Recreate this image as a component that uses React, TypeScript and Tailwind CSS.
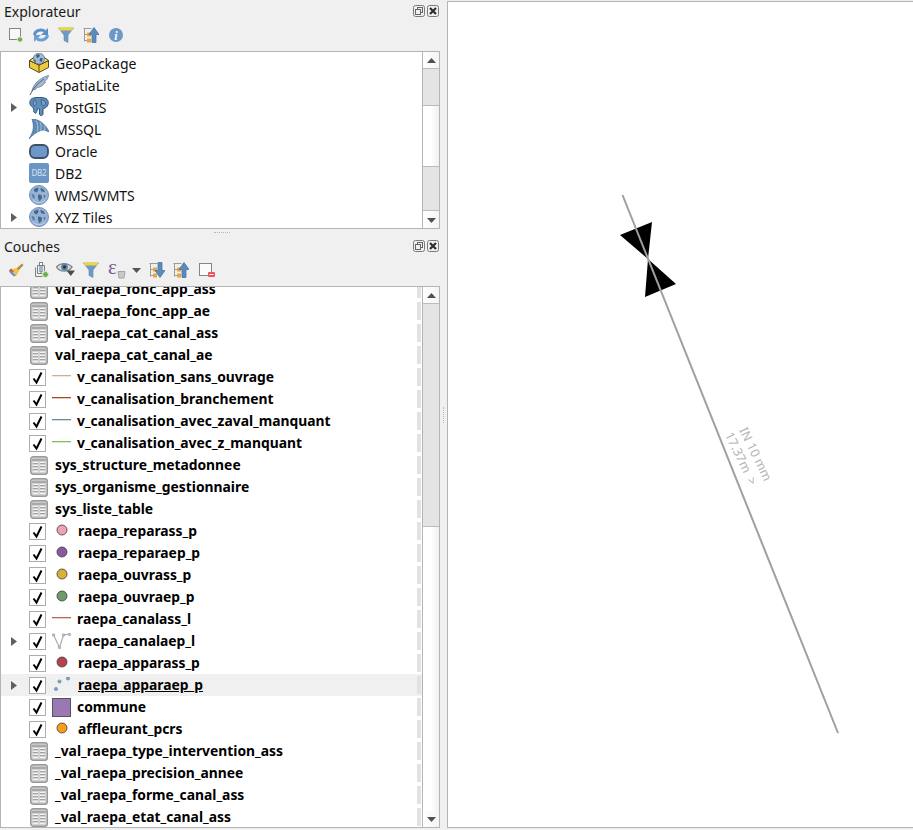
import React from 'react';

const uiFont = { fontFamily: '"Noto Sans", "Open Sans", sans-serif' };

function Svg({ size = 16, children }: { size?: number; children: React.ReactNode }) {
  return (
    <svg width={size} height={size} viewBox={`0 0 ${size} ${size}`} className="block shrink-0">
      {children}
    </svg>
  );
}

function FloatBtn() {
  return (
    <svg width="12" height="12" viewBox="0 0 12 12" className="block">
      <rect x=".5" y=".5" width="11" height="11" rx="2" fill="#f0f0f0" stroke="#7a7a7a" />
      <rect x="4.500" y="2.500" width="5" height="5" fill="none" stroke="#666" />
      <rect x="2.500" y="4.500" width="5" height="5" fill="#f0f0f0" stroke="#666" />
    </svg>
  );
}

function CloseBtn() {
  return (
    <svg width="12" height="12" viewBox="0 0 12 12" className="block">
      <rect x=".5" y=".5" width="11" height="11" rx="2" fill="#f0f0f0" stroke="#7a7a7a" />
      <path d="M3 3l6 6M9 3l-6 6" stroke="#2e2e2e" strokeWidth="2.200" />
    </svg>
  );
}

function DockTitle({ title }: { title: string }) {
  return (
    <div className="flex items-center h-6 pl-1 pr-px shrink-0">
      <span className="text-[14px] text-[#1a1a1a] flex-1 leading-[24px]">{title}</span>
      <div className="flex gap-[2px] -mt-[2px]">
        <FloatBtn />
        <CloseBtn />
      </div>
    </div>
  );
}

function ToolBtn({ children, w = 25 }: { children: React.ReactNode; w?: number }) {
  return (
    <div className="flex items-center justify-center h-4" style={{ width: w }}>
      {children}
    </div>
  );
}

function NewConnIcon() {
  return (
    <Svg>
      <rect x="1.500" y="1.500" width="11" height="11" fill="#f8f8f8" stroke="#858585" />
      <circle cx="12" cy="12.500" r="2.700" fill="#6fae4e" stroke="#e4f0dc" />
    </Svg>
  );
}

function RefreshIcon() {
  return (
    <Svg>
      <path d="M1.500 8a6.500 5.500 0 0 1 10.500-3.800" fill="none" stroke="#5b8fc7" strokeWidth="3" />
      <path d="M15 1v7H8z" fill="#5b8fc7" />
      <path d="M14.500 8a6.500 5.500 0 0 1-10.500 3.800" fill="none" stroke="#6c9fd3" strokeWidth="3" />
      <path d="M1 15V8h7z" fill="#6c9fd3" />
    </Svg>
  );
}

function FilterIcon() {
  return (
    <Svg>
      <path d="M0.500 1h15L10 8v7.500l-4-2V8z" fill="#6f9ac2" stroke="#5f87aa" strokeWidth=".6" />
      <path d="M0.500 .5h15L14 3.500H2z" fill="#efd640" />
    </Svg>
  );
}

function TreeArrowIcon({ down = false }: { down?: boolean }) {
  return (
    <Svg>
      <path d="M0.500 1.500h8M1.500 1.500v13M1.500 7.500h4M1.500 13.500h4" stroke="#9a9a9a" fill="none" />
      <rect x="4" y="5.500" width="4" height="4" fill="#f0a33c" />
      <rect x="4" y="11.500" width="4" height="4" fill="#f0a33c" />
      {down ? (
        <path d="M9 0.500h4v8h3l-5 7-5-7h3z" fill="#5a8dbb" stroke="#3f6d9c" strokeWidth=".7" />
      ) : (
        <path d="M11 .5l5 7h-3v8H9v-8H6z" fill="#5a8dbb" stroke="#3f6d9c" strokeWidth=".7" />
      )}
    </Svg>
  );
}

function InfoIcon() {
  return (
    <Svg>
      <circle cx="8" cy="8" r="7" fill="#6d98c6" />
      <text x="8" y="12.500" textAnchor="middle" fontSize="12" fontWeight="700" fontStyle="italic" fill="#fff" fontFamily="Liberation Serif, serif">i</text>
    </Svg>
  );
}

function BrushIcon() {
  return (
    <Svg>
      <path d="M8.500 6.500L14 1.500l1.500 1.500-5 5.500z" fill="#b58a3a" />
      <path d="M3 6.500c2 .5 4 0 5.500-.5l2.500 2.500c-.5 2-2 4-3 5.500z" fill="#edc53a" />
      <path d="M1 8.500L3 6.500l3 3.500-2.500 1z" fill="#d4503c" />
      <path d="M1 9c1 2 3 4 5 5.500l2-1-4.500-4.500z" fill="#6b8fc2" />
    </Svg>
  );
}

function AddGroupIcon() {
  return (
    <Svg>
      <path d="M4.500 3.500h7v8h-7zM2.500 5.500v9h7" fill="#eee" stroke="#7f7f7f" />
      <rect x="6.500" y=".5" width="3" height="3" fill="#fff" stroke="#7f7f7f" />
      <path d="M7 4v6h2V4" fill="none" stroke="#4f7fa8" />
      <circle cx="12.500" cy="12.500" r="3" fill="#6fae4e" stroke="#e4f0dc" />
    </Svg>
  );
}

function EyeIcon() {
  return (
    <svg width="20" height="16" viewBox="0 0 20 16" className="block">
      <path d="M0.500 5C4 0.500 12 0.500 16 5 12 10.500 4 10.500 0.500 5z" fill="#d4d9dd" stroke="#82878c" strokeWidth="1.300" />
      <circle cx="8.500" cy="5" r="3.400" fill="#5a80a4" />
      <circle cx="8.500" cy="5" r="1.500" fill="#1f2d3a" />
      <path d="M10.500 8.500h8.500l-4.200 5.500z" fill="#4c4c4c" />
    </svg>
  );
}

function EpsilonIcon() {
  return (
    <svg width="20" height="18" viewBox="0 0 20 18" className="block translate-x-[2px]">
      <text x="0" y="13" fontSize="21" fill="#7c5a96" fontFamily="Liberation Serif, serif">ε</text>
      <path d="M10 10.500h7l-1 6.500h-5z" fill="#c9c9c9" stroke="#a4a4a4" />
    </svg>
  );
}

function RemoveIcon() {
  return (
    <Svg>
      <rect x=".5" y="1.500" width="12" height="12" fill="#fbfbfb" stroke="#858585" />
      <rect x="9" y="10" width="7" height="5" rx="1" fill="#e8555a" />
      <rect x="10.500" y="12" width="4" height="1" fill="#fff" />
    </Svg>
  );
}

function Globe() {
  return (
    <svg width="20" height="20" viewBox="0 0 20 20" className="block">
      <circle cx="10" cy="10" r="9.500" fill="#96b2d4" stroke="#6f90b8" />
      <path d="M5 4l4-1.500 .5 2.500-2 2.500-2.500-1.500zM11 3l3.500 1 1.500 3-3.500-.5zM9 9.500l3.500.5 .5 3-2.500 3.500-1.500-3.500zM14.500 10.500l2-.5-1 3.500z" fill="#45658a" />
      <path d="M2.500 9l2.500.5 1 3.500-2 .5z" fill="#5a7aa0" />
      <path d="M3.500 15c3 3.500 10 3.500 13 0" fill="none" stroke="#bcd0e6" />
    </svg>
  );
}

function GeoPackageIcon() {
  return (
    <svg width="20" height="20" viewBox="0 0 20 20" className="block">
      <path d="M.5 7.500l9.500 4.500 9.500-4.500v7L10 19.500.5 14.500z" fill="#eecb3c" stroke="#544a1c" />
      <path d="M.5 7.500l5-3.500h9l5 3.500L10 12z" fill="#f4e48c" stroke="#3a3a2a" />
      <path d="M10 12v7" stroke="#544a1c" />
      <circle cx="10" cy="5.500" r="5.500" fill="#a3bad4" stroke="#55708e" strokeWidth=".7" />
      <path d="M7 2l3-1 1 2-3 2.500zM11 5l3 .5-1.500 3.500-2-1zM4.500 6l2 1 .5 2-2-1z" fill="#3f5e80" />
    </svg>
  );
}

function FeatherIcon() {
  return (
    <svg width="20" height="20" viewBox="0 0 20 20" className="block">
      <path d="M3 16C4 10 10 3 19.500 0.500 18.500 4 17.500 5 15.500 6.500l1 .5c-2 3-5 5.500-9 5.500l-.5 1.500-3 1z" fill="#a6b9cf" stroke="#5d7c9e" strokeWidth=".8" />
      <path d="M1 20C4 13 9 8 15 4" fill="none" stroke="#47617e" strokeWidth="1" />
    </svg>
  );
}

function ElephantIcon() {
  return (
    <svg width="20" height="20" viewBox="0 0 20 20" className="block">
      <path d="M3 1.500C6 0 14 0 17 1.500c3 2 3 6 .5 8.500-1 1-2.500 1.500-3.500 1.500v5c0 2.500-3 3-3.500.5v-5l-2-.5c-.5 2-.5 3.500-2 5l-2-2c.5-2 .5-3-1-4.500C0 8 0 3.500 3 1.500z" fill="#5f8ebd" stroke="#2f5578" />
      <path d="M6 2.500C4 4 3.500 7.500 5.500 9 7.500 8.500 8 5 6 2.500zM12 3c2-.5 4.500.5 4.500 3s-2.500 3.500-3.500 2z" fill="#7da5cb" stroke="#2f5578" strokeWidth=".8" />
    </svg>
  );
}

function SailIcon() {
  return (
    <svg width="20" height="20" viewBox="0 0 20 20" className="block">
      <path d="M3 0c7 .5 13 4.500 17 12.500-1 1-5-3-8-1-4 1-9 5-12 8.500C3.500 14 6 9 3 0z" fill="#5d8bb8" stroke="#43698e" strokeWidth=".7" />
      <path d="M7 1.500c2 3 2 6 1.500 11M11 3.500c1.500 2 1.500 5 .5 8M15 6.500c1 1.500 1 3 .5 4.500" stroke="#a9c4de" fill="none" />
    </svg>
  );
}

function OracleIcon() {
  return (
    <svg width="20" height="20" viewBox="0 0 20 20" className="block">
      <rect x="1" y="4" width="18" height="13" rx="5" fill="#6d97c6" stroke="#3a4f68" strokeWidth="1.800" />
    </svg>
  );
}

function Db2Icon() {
  return (
    <div className="w-5 h-5 rounded-[2px] bg-[#6a95c4] flex items-center justify-center text-[#d8e4f2] text-[8px] tracking-tight leading-none">
      DB2
    </div>
  );
}

function TableIcon() {
  return (
    <svg width="18" height="19" viewBox="0 0 18 19" className="block">
      <rect x=".7" y=".7" width="16.600" height="17.600" rx="2.500" fill="#d2d2d2" stroke="#999" strokeWidth="1.400" />
      <rect x="2" y="2" width="14" height="3" fill="#a9a9a9" />
      <rect x="2" y="2" width="14" height="1" fill="#c8c8c8" />
      <path d="M3 7.500h5M10 7.500h5M3 10.500h5M10 10.500h5M3 13.500h5M10 13.500h5" stroke="#a2a2a2" />
      <path d="M3 6.500h5M10 6.500h5M3 9.500h5M10 9.500h5M3 12.500h5M10 12.500h5M3 15.500h5M10 15.500h5" stroke="#f4f4f4" />
    </svg>
  );
}

function Arrow() {
  return (
    <svg width="6" height="9" viewBox="0 0 6 9" className="block">
      <path d="M0 0l6 4.500L0 9z" fill="#5e5e5e" />
    </svg>
  );
}

function ExplorerRow({ icon, label, expand }: { icon: React.ReactNode; label: string; expand?: boolean }) {
  return (
    <div className="flex items-center h-[22px]">
      <div className="w-[28px] pl-[10px] shrink-0">{expand && <Arrow />}</div>
      <div className="w-5 shrink-0">{icon}</div>
      <span className="ml-[6px] text-[14px] text-[#111] leading-[24px] pt-[2px]">{label}</span>
    </div>
  );
}

function CheckBox() {
  return (
    <svg width="17" height="17" viewBox="0 0 17 17" className="block">
      <rect x=".5" y=".5" width="16" height="16" fill="#fff" stroke="#adadad" />
      <path d="M4.500 9.500l3 4L12.500 3.500" fill="none" stroke="#000" strokeWidth="2" />
    </svg>
  );
}

function LineSym({ color }: { color: string }) {
  return (
    <svg width="19" height="2" viewBox="0 0 19 2" className="block -mt-[2px]">
      <rect x="0" y="0" width="19" height="1" fill={color} />
      <rect x="0" y="1" width="19" height="1" fill={color} opacity=".3" />
    </svg>
  );
}

function DotSym({ color }: { color: string }) {
  return (
    <svg width="12" height="12" viewBox="0 0 12 12" className="block -mt-[3px]">
      <circle cx="6" cy="6" r="5" fill={color} stroke="#3e3e3e" strokeWidth=".8" />
    </svg>
  );
}

function ScatterSym() {
  return (
    <svg width="19" height="16" viewBox="0 0 19 16" className="block">
      <circle cx="4" cy="12" r="1.600" fill="#7fa6c4" stroke="#4f7c9e" strokeWidth=".6" />
      <circle cx="7.500" cy="4.500" r="1.600" fill="#7fa6c4" stroke="#4f7c9e" strokeWidth=".6" />
      <circle cx="16" cy="1.500" r="1.600" fill="#7fa6c4" stroke="#4f7c9e" strokeWidth=".6" />
    </svg>
  );
}

function VertexSym() {
  return (
    <svg width="19" height="16" viewBox="0 0 19 16" className="block">
      <path d="M1.500 2l6 12.500L11.500 2l6-1" fill="none" stroke="#a8a8a8" strokeWidth="1.100" />
      <circle cx="1.500" cy="2" r="1.300" fill="#c4c4c4" stroke="#8a8a8a" strokeWidth=".5" />
      <circle cx="7.500" cy="14.500" r="1.300" fill="#c4c4c4" stroke="#8a8a8a" strokeWidth=".5" />
      <circle cx="11.500" cy="2" r="1.300" fill="#c4c4c4" stroke="#8a8a8a" strokeWidth=".5" />
      <circle cx="17.500" cy="1.500" r="1.300" fill="#c4c4c4" stroke="#8a8a8a" strokeWidth=".5" />
    </svg>
  );
}

type Layer = {
  label: string;
  kind: 'table' | 'line' | 'dot' | 'scatter' | 'vertex' | 'fill';
  color?: string;
  expand?: boolean;
  active?: boolean;
};

const layers: Layer[] = [
  { label: 'val_raepa_fonc_app_ass', kind: 'table' },
  { label: 'val_raepa_fonc_app_ae', kind: 'table' },
  { label: 'val_raepa_cat_canal_ass', kind: 'table' },
  { label: 'val_raepa_cat_canal_ae', kind: 'table' },
  { label: 'v_canalisation_sans_ouvrage', kind: 'line', color: '#c9b28f' },
  { label: 'v_canalisation_branchement', kind: 'line', color: '#a8482a' },
  { label: 'v_canalisation_avec_zaval_manquant', kind: 'line', color: '#6f8796' },
  { label: 'v_canalisation_avec_z_manquant', kind: 'line', color: '#7cc263' },
  { label: 'sys_structure_metadonnee', kind: 'table' },
  { label: 'sys_organisme_gestionnaire', kind: 'table' },
  { label: 'sys_liste_table', kind: 'table' },
  { label: 'raepa_reparass_p', kind: 'dot', color: '#f0a2b4' },
  { label: 'raepa_reparaep_p', kind: 'dot', color: '#8a5a9e' },
  { label: 'raepa_ouvrass_p', kind: 'dot', color: '#d8b238' },
  { label: 'raepa_ouvraep_p', kind: 'dot', color: '#6f9a6c' },
  { label: 'raepa_canalass_l', kind: 'line', color: '#b5694e' },
  { label: 'raepa_canalaep_l', kind: 'vertex', expand: true },
  { label: 'raepa_apparass_p', kind: 'dot', color: '#b5434c' },
  { label: 'raepa_apparaep_p', kind: 'scatter', expand: true, active: true },
  { label: 'commune', kind: 'fill', color: '#9a78b4' },
  { label: 'affleurant_pcrs', kind: 'dot', color: '#f89c1c' },
  { label: '_val_raepa_type_intervention_ass', kind: 'table' },
  { label: '_val_raepa_precision_annee', kind: 'table' },
  { label: '_val_raepa_forme_canal_ass', kind: 'table' },
  { label: '_val_raepa_etat_canal_ass', kind: 'table' },
];

function LayerRow({ layer }: { layer: Layer }) {
  const isTable = layer.kind === 'table';
  const pad = layer.kind === 'line' || layer.kind === 'fill' ? 'ml-[6px]' : 'ml-[7px]';
  return (
    <div className={`flex items-center h-[22px] ${layer.active ? 'bg-[#f0f0f0]' : ''}`}>
      <div className="w-[28px] pl-[10px] shrink-0">{layer.expand && <Arrow />}</div>
      {isTable ? (
        <>
          <div className="ml-px shrink-0">
            <TableIcon />
          </div>
          <span className="ml-[7px] text-[13.85px] font-bold text-black leading-none">{layer.label}</span>
        </>
      ) : (
        <>
          <div className="shrink-0">
            <CheckBox />
          </div>
          <div className="ml-[6px] w-[19px] flex justify-center shrink-0">
            {layer.kind === 'line' && <LineSym color={layer.color!} />}
            {layer.kind === 'dot' && <DotSym color={layer.color!} />}
            {layer.kind === 'scatter' && <ScatterSym />}
            {layer.kind === 'vertex' && <VertexSym />}
            {layer.kind === 'fill' && (
              <div className="w-[19px] h-[19px] border border-[#555]" style={{ backgroundColor: layer.color }} />
            )}
          </div>
          <span className={`${pad} text-[13.85px] font-bold text-black leading-none ${layer.active ? 'underline' : ''}`}>
            {layer.label}
          </span>
        </>
      )}
      <div className="ml-auto mr-px w-1 h-[18px] bg-[#e2e2e2] shrink-0" />
    </div>
  );
}

function ScrollBtn({ up }: { up?: boolean }) {
  return (
    <div className="h-4 bg-gradient-to-r from-[#ffffff] to-[#f4f4f4] flex items-center justify-center shrink-0">
      <svg width="9" height="5" viewBox="0 0 9 5" className="block">
        <path d={up ? 'M4.500 0L9 5H0z' : 'M0 0h9L4.500 5z'} fill="#505050" />
      </svg>
    </div>
  );
}

function ScrollBar({ handle, track, tail }: { handle: number; track: number; tail: number }) {
  return (
    <div className="w-[17px] shrink-0 border-l border-[#b4b4b4] flex flex-col h-full">
      <ScrollBtn up />
      <div className="flex-1 flex flex-col min-h-0">
        <div className="bg-[#e4e4e4] border-t border-b border-[#bcbcbc] shrink-0" style={{ height: handle }} />
        <div className="bg-gradient-to-r from-[#ffffff] via-[#ffffff] to-[#f0f0f0] shrink-0" style={{ height: track }} />
        {tail > 0 && <div className="bg-[#e4e4e4] border-t border-b border-[#bcbcbc] shrink-0" style={{ height: tail }} />}
        <div className="flex-1 bg-gradient-to-r from-[#ffffff] via-[#ffffff] to-[#f0f0f0]" />
      </div>
      <ScrollBtn />
    </div>
  );
}

function MapCanvas() {
  return (
    <svg viewBox="448 2 465 825" className="block w-full h-full">
      <polygon points="620,235 652,222 648,259 676,284 645,297 648,259" fill="#000" />
      <line x1="622.500" y1="195" x2="838" y2="733" stroke="#a0a0a0" strokeWidth="2" />
      <g transform="translate(739,430) rotate(64)" fill="#b4b4b4" fontSize="12.500" fontFamily="Noto Sans, sans-serif">
        <text x="0" y="0">IN 10 mm</text>
        <text x="-2" y="15" xmlSpace="preserve">17.37m  &gt;</text>
      </g>
    </svg>
  );
}

export default function App() {
  return (
    <div className="w-[913px] h-[830px] bg-[#f0f0f0] flex overflow-hidden" style={uiFont}>
      <div className="w-[440px] shrink-0 flex flex-col">
        {/* Explorateur */}
        <DockTitle title="Explorateur" />
        <div className="flex items-center h-4 mt-[2px] mb-[9px] pl-[3px] shrink-0 translate-y-px">
          <ToolBtn><NewConnIcon /></ToolBtn>
          <ToolBtn><RefreshIcon /></ToolBtn>
          <ToolBtn><FilterIcon /></ToolBtn>
          <ToolBtn><TreeArrowIcon /></ToolBtn>
          <ToolBtn><InfoIcon /></ToolBtn>
        </div>
        <div className="h-[178px] border border-[#b4b4b4] bg-white flex shrink-0">
          <div className="flex-1 min-w-0 overflow-hidden">
            <ExplorerRow icon={<GeoPackageIcon />} label="GeoPackage" />
            <ExplorerRow icon={<FeatherIcon />} label="SpatiaLite" />
            <ExplorerRow icon={<ElephantIcon />} label="PostGIS" expand />
            <ExplorerRow icon={<SailIcon />} label="MSSQL" />
            <ExplorerRow icon={<OracleIcon />} label="Oracle" />
            <ExplorerRow icon={<Db2Icon />} label="DB2" />
            <ExplorerRow icon={<Globe />} label="WMS/WMTS" />
            <ExplorerRow icon={<Globe />} label="XYZ Tiles" expand />
          </div>
          <ScrollBar handle={38} track={60} tail={45} />
        </div>

        {/* splitter */}
        <div className="h-[6px] flex justify-end items-center pr-[210px] shrink-0">
          <div className="w-4 border-t border-dotted border-[#b8b8b8]" />
        </div>

        {/* Couches */}
        <DockTitle title="Couches" />
        <div className="flex items-center h-4 mt-[3px] pl-[3px] shrink-0">
          <ToolBtn><BrushIcon /></ToolBtn>
          <ToolBtn><AddGroupIcon /></ToolBtn>
          <ToolBtn><EyeIcon /></ToolBtn>
          <ToolBtn><FilterIcon /></ToolBtn>
          <ToolBtn w={26}><EpsilonIcon /></ToolBtn>
          <ToolBtn w={14}>
            <svg width="9" height="5" viewBox="0 0 9 5" className="block"><path d="M0 0h9L4.500 5z" fill="#555" /></svg>
          </ToolBtn>
          <ToolBtn w={28}><TreeArrowIcon down /></ToolBtn>
          <ToolBtn w={20}><TreeArrowIcon /></ToolBtn>
          <ToolBtn w={32}><RemoveIcon /></ToolBtn>
        </div>
        <div className="flex-1 min-h-0 mt-2 mb-[2px] border border-[#b4b4b4] bg-white flex">
          <div className="flex-1 min-w-0 overflow-hidden">
            <div className="-mt-[9px]">
              {layers.map((l) => (
                <LayerRow key={l.label} layer={l} />
              ))}
            </div>
          </div>
          <ScrollBar handle={224} track={0} tail={0} />
        </div>
      </div>

      {/* splitter vertical */}
      <div className="w-[7px] shrink-0 flex items-center justify-center">
        <div className="h-4 border-l border-dotted border-[#b8b8b8]" />
      </div>

      {/* Map canvas */}
      <div className="flex-1 min-w-0 mt-px mb-[2px] border-t border-b border-l border-[#b4b4b4] bg-white">
        <MapCanvas />
      </div>
    </div>
  );
}
